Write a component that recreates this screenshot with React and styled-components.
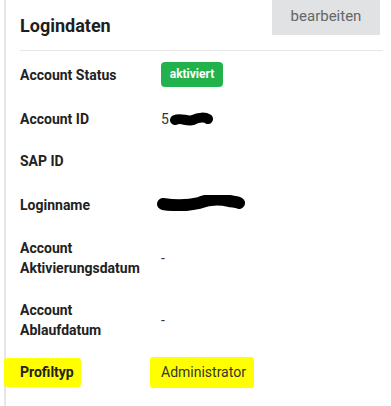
import styled, { createGlobalStyle } from "styled-components";

const Global = createGlobalStyle`
  body {
    margin: 0;
    background: #fff;
    font-family: Roboto, "Liberation Sans", Arial, sans-serif;
  }
`;

const rows = [
  { label: "Account Status", value: "badge" },
  { label: "Account ID", value: "id" },
  { label: "SAP ID", value: "" },
  { label: "Loginname", value: "login" },
  { label: "Account Aktivierungsdatum", value: "-" },
  { label: "Account Ablaufdatum", value: "-" },
  { label: "Profiltyp", value: "Administrator", marked: true },
];

function Scribble({ width, height, d, stroke }) {
  return (
    <svg width={width} height={height} viewBox={`0 0 ${width} ${height}`}>
      <path
        d={d}
        fill="none"
        stroke="#000"
        strokeWidth={stroke}
        strokeLinecap="round"
        strokeLinejoin="round"
      />
    </svg>
  );
}

function Value({ value, marked }) {
  if (value === "badge") return <Badge>aktiviert</Badge>;
  if (value === "id")
    return (
      <Redacted>
        5
        <Scribble
          width={44}
          height={14}
          stroke={10}
          d="M6,8 C12,5 18,10 24,8 C30,5 36,5 39,7"
        />
      </Redacted>
    );
  if (value === "login")
    return (
      <Redacted style={{ marginLeft: -4 }}>
        <Scribble
          width={88}
          height={16}
          stroke={12}
          d="M6,9 C20,11 34,10 42,8 C52,4 64,4 72,6 C78,7 80,7 82,8"
        />
      </Redacted>
    );
  if (marked)
    return (
      <Highlight $left={11} $right={8} $v={5}>
        {value}
      </Highlight>
    );
  return <span>{value}</span>;
}

export default function App() {
  return (
    <>
      <Global />
      <Panel>
        <Header>
          <Title>Logindaten</Title>
          <EditButton>bearbeiten</EditButton>
        </Header>
        <List>
          {rows.map((r) => (
            <Row key={r.label}>
              <Label>
                {r.marked ? (
                  <Highlight $left={16} $right={7} $v={4}>
                    {r.label}
                  </Highlight>
                ) : (
                  r.label
                )}
              </Label>
              <ValueCell>
                <Value value={r.value} marked={r.marked} />
              </ValueCell>
            </Row>
          ))}
        </List>
      </Panel>
    </>
  );
}

const Panel = styled.section`
  margin-left: 4px;
  border-left: 2px solid #e6e6e6;
  min-height: 406px;
  box-sizing: border-box;
  padding: 0 8px 0 14px;
`;

const Header = styled.div`
  display: flex;
  justify-content: space-between;
  align-items: flex-start;
  height: 50px;
  border-bottom: 1px solid #e6e6e6;
`;

const Title = styled.h2`
  margin: 15px 0 0;
  font-size: 18px;
  line-height: 22px;
  font-weight: 700;
  color: #1e1e1e;
`;

const EditButton = styled.button`
  width: 108px;
  height: 35px;
  margin-right: 3px;
  padding: 0 0 3px;
  border: none;
  border-radius: 0;
  background: #e1e2e4;
  color: #666;
  font-family: inherit;
  font-size: 15px;
`;

const List = styled.div`
  display: flex;
  flex-direction: column;
`;

const Row = styled.div`
  display: grid;
  grid-template-columns: 141px 1fr;
  align-items: center;
  padding: 11px 0;
  min-height: 20px;
`;

const Label = styled.div`
  font-size: 14px;
  line-height: 20px;
  font-weight: 700;
  color: #222;
  padding-right: 8px;
`;

const ValueCell = styled.div`
  font-size: 14px;
  line-height: 20px;
  color: #333;
`;

const Badge = styled.span`
  display: inline-block;
  width: 62px;
  height: 25px;
  line-height: 25px;
  text-align: center;
  border-radius: 4px;
  background: #22b24c;
  color: #fff;
  font-size: 12px;
  font-weight: 700;
`;

const Redacted = styled.span`
  display: inline-flex;
  align-items: center;
  height: 20px;
`;

const Highlight = styled.span`
  display: inline-block;
  background: #ffff00;
  border-radius: 3px;
  margin: ${(p) => -p.$v}px 0 ${(p) => -p.$v}px ${(p) => -p.$left}px;
  padding: ${(p) => p.$v}px ${(p) => p.$right}px ${(p) => p.$v + 1}px ${(p) => p.$left}px;
`;
